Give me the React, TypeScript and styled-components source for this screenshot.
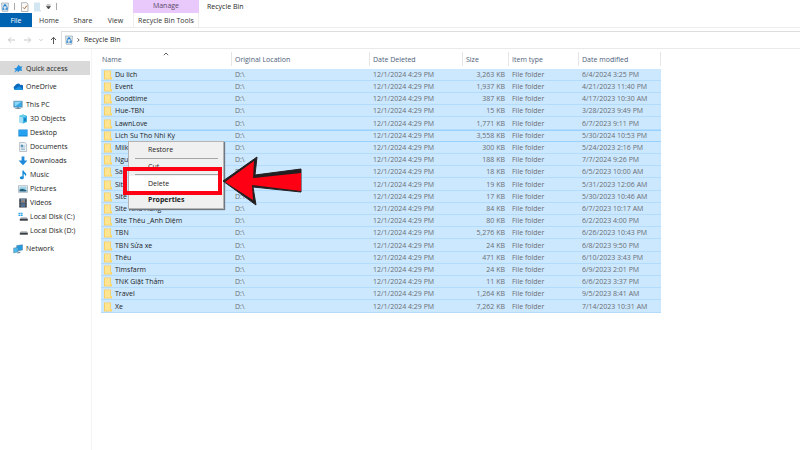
import React from "react";
import styled, { createGlobalStyle, css } from "styled-components";

const Global = createGlobalStyle`
  * { box-sizing: border-box; }
  body { margin: 0; background: #fff; color: #1c1c1c; font: 7px/12px "Open Sans", "Noto Sans", sans-serif; }
  button, input { font: inherit; color: inherit; border: 0; padding: 0; margin: 0; background: none; }
  a { color: inherit; text-decoration: none; }
  svg { display: block; flex: none; }
`;

const Ribbon = styled.header`
  display: grid;
  grid-template-columns: 133px 66px 1fr;
  border-bottom: 1px solid #ececec;
`;
const RibbonGroup = styled.div`
  display: flex;
  flex-direction: column;
`;
const QuickTools = styled.div`
  display: flex;
  align-items: center;
  height: 13px;
  gap: 5px;
  padding-left: 1px;
`;
const IconButton = styled.button`
  display: flex;
  align-items: center;
  justify-content: center;
`;
const Divider = styled.span`
  width: 1px;
  height: 7px;
  background: #a8a8a8;
`;
const Tabs = styled.nav`
  display: flex;
  height: 14px;
`;
const Tab = styled.button<{ $active?: boolean; $width: number }>`
  width: ${(p) => p.$width}px;
  padding-top: 1px;
  text-align: center;
  color: ${(p) => (p.$active ? "#fff" : "#333")};
  background: ${(p) => (p.$active ? "#0063b1" : "transparent")};
`;
const Manage = styled.div`
  height: 13px;
  text-align: center;
  color: #5a4a66;
  background: #e9c8fb;
`;
const ToolsTab = styled.button`
  height: 14px;
  padding-top: 1px;
  text-align: center;
  color: #333;
  border-left: 1px solid #eee;
  border-right: 1px solid #eee;
`;
const WindowTitle = styled.h1`
  margin: 0;
  padding: 1px 8px;
  font-size: 7px;
  font-weight: 400;
`;

const AddressRow = styled.div`
  display: flex;
  align-items: stretch;
  padding-top: 3px;
  border-bottom: 1px solid #e9e9e9;
`;
const NavButtons = styled.div`
  display: flex;
  align-items: center;
  gap: 7px;
  width: 61px;
  padding-left: 7px;
`;
const AddressBar = styled.div`
  display: flex;
  flex: 1;
  align-items: center;
  gap: 4px;
  height: 17px;
  padding-left: 3px;
  border: 1px solid #dedede;
  border-right: 0;
  border-bottom: 0;
`;

const Body = styled.div`
  display: grid;
  grid-template-columns: 92px 1fr;
`;
const Sidebar = styled.nav`
  display: flex;
  flex-direction: column;
  padding-top: 12px;
  min-height: calc(100vh - 49px);
  border-right: 1px solid #f4f4f4;
`;
const SideLink = styled.a<{ $level?: number; $gap?: boolean; $selected?: boolean }>`
  display: flex;
  align-items: center;
  gap: ${(p) => (p.$level ? 2 : 3)}px;
  height: 14px;
  padding-top: 1px;
  margin-right: 1px;
  margin-top: ${(p) => (p.$gap ? 4 : 0)}px;
  padding-left: ${(p) => (p.$level ? 18 : 13)}px;
  background: ${(p) => (p.$selected ? "#d9d9d9" : "transparent")};
`;

const Main = styled.main`
  position: relative;
  padding: 3px 0 0 9px;
`;
const FileTable = styled.table`
  width: 560px;
  table-layout: fixed;
  border-collapse: separate;
  border-spacing: 0;
`;
const HeadCell = styled.th`
  position: relative;
  height: 14px;
  padding: 1px 0 0 3px;
  text-align: left;
  font-weight: 400;
  color: #4c607a;
  border-right: 1px solid #e5e5e5;
  &:first-child { padding-left: 1px; }
`;
const SortMark = styled.svg`
  position: absolute;
  top: 0;
  left: 62px;
`;
const Spacer = styled.tr`
  height: 3px;
`;
const Cell = styled.td<{ $right?: boolean }>`
  height: 12px;
  padding: 1px ${(p) => (p.$right ? 4 : 0)}px 0 3px;
  line-height: 10px;
  text-align: ${(p) => (p.$right ? "right" : "left")};
  white-space: nowrap;
  color: #6b6e72;
  background: #cce8ff;
  border-bottom: 1px solid #b3dbfb;
`;
const Row = styled.tr<{ $focused?: boolean }>`
  &:nth-child(5n) ${Cell} { height: 13px; }
  ${(p) =>
    p.$focused &&
    css`
      ${Cell} {
        padding-top: 0;
        border-bottom-color: #99d1ff;
        border-top: 1px solid #99d1ff;
      }
    `}
`;
const FileName = styled.span`
  display: flex;
  align-items: center;
  gap: 3px;
  color: #1c1c1c;
`;

const Menu = styled.div`
  position: absolute;
  top: 92px;
  left: 36px;
  display: flex;
  flex-direction: column;
  width: 96px;
  background: #f0f0f0;
  border: 1px solid #b4b4b4;
  box-shadow: 1px 1px 1px #6f7780;
`;
const MenuItem = styled.button<{ $bold?: boolean; $hot?: boolean; $height: number }>`
  height: ${(p) => p.$height}px;
  padding-left: 19px;
  text-align: left;
  font-weight: ${(p) => (p.$bold ? 700 : 400)};
  background: ${(p) => (p.$hot ? "#fff" : "transparent")};
`;
const MenuRule = styled.hr`
  width: 83px;
  height: 1px;
  margin: 1px 6px;
  border: 0;
  background: #a5a5a5;
`;
const Highlight = styled.div`
  position: absolute;
  top: 118px;
  left: 31px;
  width: 99px;
  height: 28px;
  border: 4px solid #fd0014;
`;
const Pointer = styled.svg`
  position: absolute;
  top: 107px;
  left: 130px;
`;

const Bin = () => (
  <svg width="8" height="10" viewBox="0 0 8 10">
    <path d="M.5 1h7L6.8 9.3H1.2z" fill="#dce8ee" stroke="#9aa8b3" strokeWidth=".7" />
    <path d="M2.4 4.6 4 2.6l1.5 2M5.9 5.2l.3 1.9H4.4M3.4 7.2H2l.3-1.8" fill="none" stroke="#1f7fd0" strokeWidth="1.1" />
  </svg>
);
const Folder = () => (
  <svg width="8" height="10" viewBox="0 0 8 10">
    <path d="M0 .5h7V7h1v2.5H0z" fill="#f5d067" />
    <path d="M1 1.2h5.2v7.4H1z" fill="#ffe592" />
    <path d="M6 7h1.4v1.8H6z" fill="#ffdc70" />
  </svg>
);
const NavArrow = ({ d, color, w = 9 }: { d: string; color: string; w?: number }) => (
  <svg width={w} height="8" viewBox={`0 0 ${w} 8`} fill="none" stroke={color}>
    <path d={d} />
  </svg>
);

const icons: Record<string, React.ReactNode> = {
  star: <path d="M5.6.8 7 2.5l2.5-.1-1.2 2.2 1 2.3-2.5-.3-1.9 1.8-.5-2L1 8.7l1.8-2.6L.9 4.6l2.5-.7z" fill="#2490df" />,
  cloud: (
    <>
      <path d="M2.5 8A2.2 2.2 0 0 1 2 3.8 3 3 0 0 1 7.4 3 2.4 2.4 0 0 1 9 8z" fill="#0a69bd" />
      <path d="M1 7.5 6.2 4.2 9.8 7Q9.4 8 8.5 8H2.2Q1.4 8 1 7.5" fill="#1b91e0" />
    </>
  ),
  pc: (
    <>
      <path d="M.8 1.2h8.4v6H.8z" fill="#38aae8" stroke="#5b7f97" strokeWidth=".6" />
      <path d="M1.4 1.8h7L2 6.4z" fill="#8dd5f8" />
      <path d="M4 7.3h2v1h1.8v.8H2.2v-.8H4z" fill="#718797" />
    </>
  ),
  cube: (
    <>
      <path d="m1 2 4-1.5L9 2v6L5 9.6 1 8z" fill="#38b1e5" />
      <path d="m1 2 4 1.4V9.6L1 8z" fill="#a3dff4" />
      <path d="m1 2 4-1.5L9 2 5 3.4z" fill="#68cced" />
      <path d="M6 4.4 8 3.8v3L6 7.7z" fill="#1382bf" />
    </>
  ),
  desktop: (
    <>
      <path d="M.4 1.5h9.2v7H.4z" fill="#168ad9" />
      <path d="M1 2h8v5.3H1z" fill="#27a1ef" />
    </>
  ),
  doc: (
    <>
      <path d="M1.7.5h5L8.6 2v7.5H1.7z" fill="#edf2f5" stroke="#8d9ca7" strokeWidth=".6" />
      <path d="M3 3h2v1.8H3zM3 6h4M3 7.5h4M5.8 4h1.5" fill="#3c88bd" stroke="#6597b8" strokeWidth=".6" />
    </>
  ),
  down: <path d="M3.6.5h2.8v4h3L5 9.3.6 4.5h3z" fill="#1e88d9" />,
  music: (
    <>
      <path d="M4.4.5h1.2Q6 2.3 8 3.4q1 1.1-.4 3Q7.6 4.5 5.7 4v3.7H4.4z" fill="#1689d7" />
      <ellipse cx="3.8" cy="7.7" rx="2" ry="1.5" fill="#1689d7" />
    </>
  ),
  picture: (
    <>
      <path d="M.5 1.7h9v6.7h-9z" fill="#eef3f6" stroke="#8a9ba6" strokeWidth=".6" />
      <path d="M1.5 2.8h7v4.5h-7z" fill="#9dd1e6" />
      <path d="m1.5 5.5 3-.8 4 1.5v1.2h-7z" fill="#245f7e" />
    </>
  ),
  video: (
    <>
      <path d="M1.2.5h7.6v9H1.2z" fill="#333b45" />
      <path d="M3 1h4v3.7H3z" fill="#708dac" />
      <path d="M3 5.2h4V9H3z" fill="#526f92" />
      <path d="M2 1v8M8 1v8" stroke="#c6cbd0" strokeWidth=".6" strokeDasharray=".8 .8" />
      <path d="m3.2 4.2 2-2 1.8 2z" fill="#b67a50" />
    </>
  ),
  diskC: (
    <>
      <path d="M.5.7h1.8v1.4H.5zM2.8.7h1.8v1.4H2.8zM.5 2.5h1.8V4H.5zM2.8 2.5h1.8V4H2.8z" fill="#27a4eb" />
      <path d="m3 5 5.6.1L9.7 7H1.8z" fill="#c1c6ca" />
      <path d="M1.8 6.7h8v2h-8z" fill="#3a4046" />
    </>
  ),
  diskD: (
    <>
      <path d="m2.8 5 6 .1L9.7 7H1.8z" fill="#c1c6ca" />
      <path d="M1.8 6.7h8v2h-8z" fill="#3a4046" />
    </>
  ),
  network: (
    <>
      <path d="m3.6 1.5 6-.8v5.4l-6 1.2z" fill="#2798de" stroke="#4f7893" strokeWidth=".4" />
      <path d="m.6 4 4.5-.6v4.5L.6 9z" fill="#4eb7eb" stroke="#4f7893" strokeWidth=".4" />
      <path d="m4.2 8.7 3.2-1v1.1l-2.8.7z" fill="#586c7a" />
    </>
  ),
};

const places: { icon: string; label: string; level?: number; gap?: boolean; selected?: boolean }[] = [
  { icon: "star", label: "Quick access", selected: true },
  { icon: "cloud", label: "OneDrive", gap: true },
  { icon: "pc", label: "This PC", gap: true },
  { icon: "cube", label: "3D Objects", level: 1 },
  { icon: "desktop", label: "Desktop", level: 1 },
  { icon: "doc", label: "Documents", level: 1 },
  { icon: "down", label: "Downloads", level: 1 },
  { icon: "music", label: "Music", level: 1 },
  { icon: "picture", label: "Pictures", level: 1 },
  { icon: "video", label: "Videos", level: 1 },
  { icon: "diskC", label: "Local Disk (C:)", level: 1 },
  { icon: "diskD", label: "Local Disk (D:)", level: 1 },
  { icon: "network", label: "Network", gap: true },
];

const files: [string, string, string][] = [
  ["Du lich", "3,263 KB", "6/4/2024 3:25 PM"],
  ["Event", "1,937 KB", "4/21/2023 11:40 PM"],
  ["Goodtime", "387 KB", "4/17/2023 10:30 AM"],
  ["Hue-TBN", "15 KB", "3/28/2023 9:49 PM"],
  ["LawnLove", "1,771 KB", "6/7/2023 9:11 PM"],
  ["Lich Su Tho Nhi Ky", "3,558 KB", "5/30/2024 10:53 PM"],
  ["Milk", "300 KB", "5/24/2023 2:16 PM"],
  ["Nguyen", "188 KB", "7/7/2024 9:26 PM"],
  ["San", "18 KB", "6/5/2023 10:00 AM"],
  ["Site", "19 KB", "5/31/2023 12:06 AM"],
  ["Site", "17 KB", "5/30/2023 10:46 AM"],
  ["Site Nhà Hàng", "84 KB", "6/7/2023 10:17 AM"],
  ["Site Thêu _Anh Diệm", "80 KB", "6/2/2023 4:00 PM"],
  ["TBN", "5,276 KB", "6/26/2023 10:43 PM"],
  ["TBN Sửa xe", "24 KB", "6/8/2023 9:50 PM"],
  ["Thêu", "471 KB", "6/10/2023 3:43 PM"],
  ["Timsfarm", "24 KB", "6/9/2023 2:01 PM"],
  ["TNK Giặt Thảm", "11 KB", "6/6/2023 3:37 PM"],
  ["Travel", "1,264 KB", "9/5/2023 8:41 AM"],
  ["Xe", "7,262 KB", "7/14/2023 10:31 AM"],
];

const columns: [string, number][] = [
  ["Name", 131],
  ["Original Location", 138],
  ["Date Deleted", 93],
  ["Size", 46],
  ["Item type", 70],
  ["Date modified", 82],
];

export default function App() {
  return (
    <>
      <Global />
      <Ribbon>
        <RibbonGroup>
          <QuickTools>
            <IconButton aria-label="Recycle Bin"><Bin /></IconButton>
            <Divider />
            <IconButton aria-label="Properties">
              <svg width="9" height="10" viewBox="0 0 9 10">
                <path d="M1.5.7h5L8 2v7.5H1.5z" fill="#fafafa" stroke="#999" strokeWidth=".7" />
                <path d="m3 5.3 1.4 1.5L7 3.5" fill="none" stroke="#b06b3a" />
              </svg>
            </IconButton>
            <IconButton aria-label="New folder">
              <svg width="7" height="10" viewBox="0 0 7 10"><path d="M0 .5h6V8h1v1.5H0z" fill="#d3e7f3" /></svg>
            </IconButton>
            <IconButton aria-label="Customize">
              <svg width="5" height="6" viewBox="0 0 5 6"><path d="M.5 1h4M.5 2.5h4L2.5 5z" fill="#444" stroke="#444" strokeWidth=".6" /></svg>
            </IconButton>
            <Divider />
          </QuickTools>
          <Tabs>
            <Tab $active $width={32}>File</Tab>
            <Tab $width={34}>Home</Tab>
            <Tab $width={34}>Share</Tab>
            <Tab $width={31}>View</Tab>
          </Tabs>
        </RibbonGroup>
        <RibbonGroup>
          <Manage>Manage</Manage>
          <ToolsTab>Recycle Bin Tools</ToolsTab>
        </RibbonGroup>
        <WindowTitle>Recycle Bin</WindowTitle>
      </Ribbon>
      <AddressRow>
        <NavButtons>
          <IconButton aria-label="Back"><NavArrow color="#c8c8c8" d="M8 4H1.5M4 1.3 1.3 4 4 6.7" /></IconButton>
          <IconButton aria-label="Forward"><NavArrow color="#c8c8c8" d="M1 4h6.5M5 1.3 7.7 4 5 6.7" /></IconButton>
          <IconButton aria-label="Recent"><NavArrow w={4} color="#c8c8c8" d="m.5 3.2 1.5 1.5 1.5-1.5" /></IconButton>
          <IconButton aria-label="Up"><NavArrow w={7} color="#555" d="M3.5 8V1.3M1 4l2.5-2.7L6 4" /></IconButton>
        </NavButtons>
        <AddressBar>
          <Bin />
          <NavArrow w={3} color="#555" d="m.5 2.3 1.7 1.7L.5 5.7" />
          <a href="#bin">Recycle Bin</a>
        </AddressBar>
      </AddressRow>
      <Body>
        <Sidebar>
          {places.map((p) => (
            <SideLink key={p.label} href="#place" $level={p.level} $gap={p.gap} $selected={p.selected}>
              <svg width="10" height="10" viewBox="0 0 10 10">{icons[p.icon]}</svg>
              {p.label}
            </SideLink>
          ))}
        </Sidebar>
        <Main>
          <FileTable>
            <colgroup>{columns.map(([name, width]) => <col key={name} width={width} />)}</colgroup>
            <thead>
              <tr>
                {columns.map(([name], i) => (
                  <HeadCell key={name}>
                    {name}
                    {i === 0 && (
                      <SortMark width="6" height="4" viewBox="0 0 6 4" fill="none" stroke="#666">
                        <path d="M.8 3.2 3 1l2.2 2.2" />
                      </SortMark>
                    )}
                  </HeadCell>
                ))}
              </tr>
              <Spacer />
            </thead>
            <tbody>
              {files.map(([name, size, modified], i) => (
                <Row key={i} $focused={i === 5}>
                  <Cell><FileName><Folder />{name}</FileName></Cell>
                  <Cell>D:\</Cell>
                  <Cell>12/1/2024 4:29 PM</Cell>
                  <Cell $right>{size}</Cell>
                  <Cell>File folder</Cell>
                  <Cell>{modified}</Cell>
                </Row>
              ))}
            </tbody>
          </FileTable>
          <Menu>
            <MenuItem $height={15}>Restore</MenuItem>
            <MenuRule />
            <MenuItem $height={13}>Cut</MenuItem>
            <MenuRule />
            <MenuItem $height={16} $hot>Delete</MenuItem>
            <MenuItem $height={16} $bold>Properties</MenuItem>
          </Menu>
          <Highlight />
          <Pointer width="82" height="52" viewBox="0 0 82 52">
            <path d="M1 25 35 1l-2 18 46-6v23l-48-5 3 18z" fill="#231f20" stroke="#231f20" />
            <path d="M3 26 32 5l-1 17 48-5v18l-49-6 1 15z" fill="#fd0014" />
          </Pointer>
        </Main>
      </Body>
    </>
  );
}
